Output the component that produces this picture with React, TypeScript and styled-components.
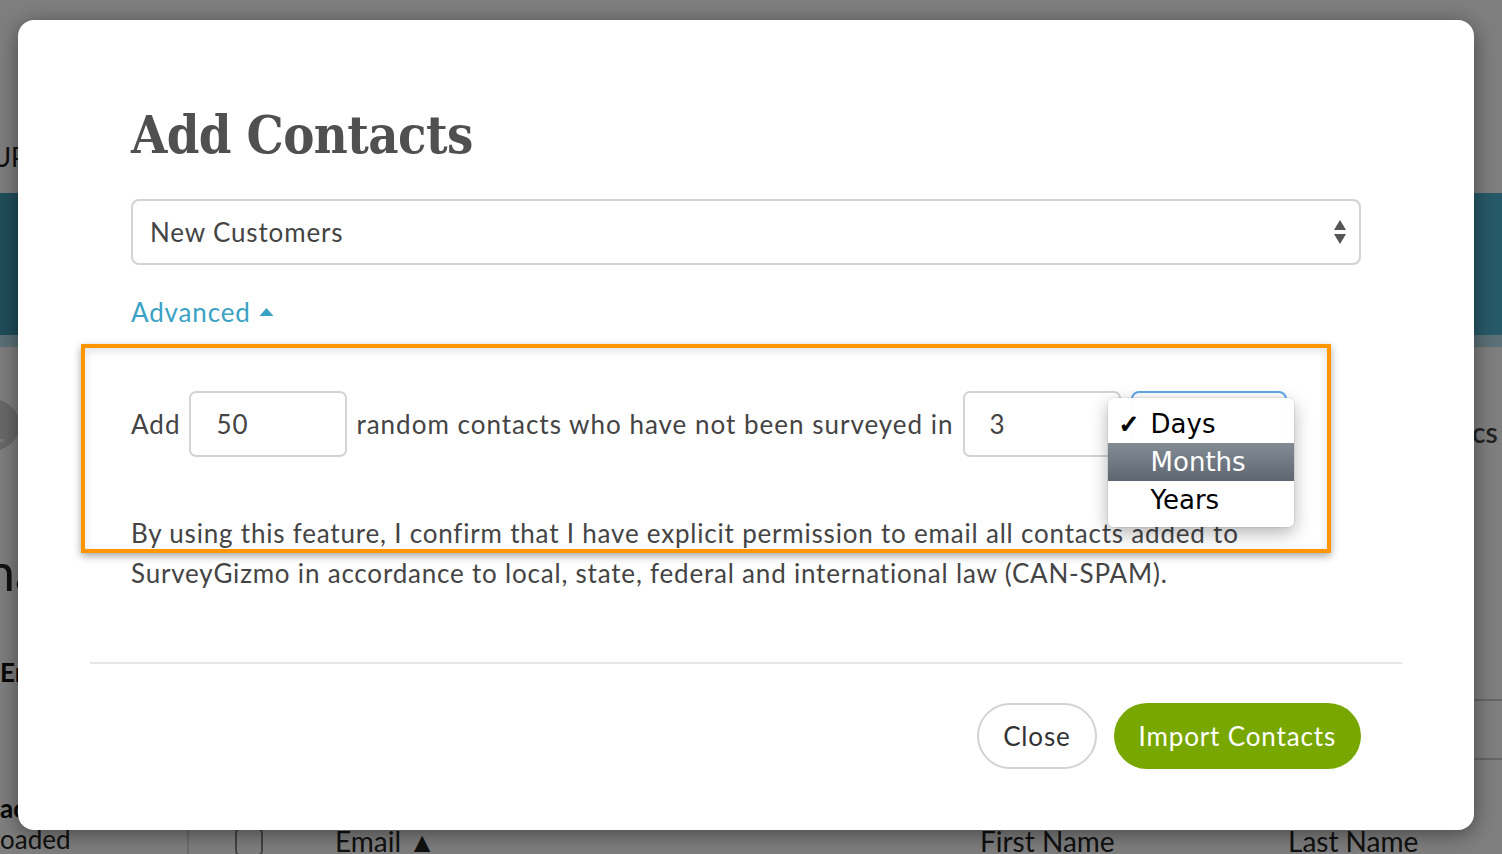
import React from "react";
import styled, { createGlobalStyle } from "styled-components";

const Global = createGlobalStyle`
  html, body { margin: 0; padding: 0; }
  body {
    width: 1502px;
    height: 854px;
    overflow: hidden;
    font-family: Lato, "Open Sans", sans-serif;
    background: #fff;
  }
`;

/* ---------- background page ---------- */
const Page = styled.div`
  position: relative;
  width: 1502px;
  height: 854px;
  overflow: hidden;
  display: flex;
  flex-direction: column;
  font-family: Lato, sans-serif;
  color: #222;
`;
const PageHeader = styled.div`
  flex-shrink: 0;
  height: 193px;
  display: flex;
  align-items: flex-end;
  padding-bottom: 20px;
  box-sizing: border-box;
  font-size: 26px;
  color: #222;
  margin-left: -8px;
`;
const Band = styled.div`
  flex-shrink: 0;
  height: 154px;
  display: flex;
  flex-direction: column;
  background: #4fb2cf;
`;
const BandMain = styled.div`
  flex: 1;
  background: linear-gradient(90deg, #3f9cb6, #4aaecc 50%, #4fb4d2);
`;
const BandStrip = styled.div`
  height: 12px;
  background: #b6e3ee;
`;
const PageBody = styled.div`
  flex: 1;
  min-height: 0;
  display: flex;
  justify-content: space-between;
`;
const LeftCol = styled.div`
  display: flex;
  flex-direction: column;
  margin-left: -44px;
  padding-top: 51px;
`;
const Circle = styled.div`
  width: 64px;
  height: 64px;
  border-radius: 50%;
  background: #d2d2d2;
  color: #f4f4f4;
  font-size: 44px;
  display: flex;
  align-items: center;
  justify-content: center;
  padding-left: 12px;
  box-sizing: border-box;
`;
const BigText = styled.div`
  margin-top: 88px;
  margin-left: 30px;
  font-size: 52px;
  color: #222;
`;
const BoldText = styled.div<{ $mt: number }>`
  margin-top: ${(p) => p.$mt}px;
  margin-left: 44px;
  font-size: 26px;
  font-weight: 700;
  color: #111;
`;
const PlainText = styled.div`
  margin-left: 44px;
  font-size: 26px;
  color: #222;
  line-height: 30px;
`;
const RightCol = styled.div`
  width: 30px;
  display: flex;
  flex-direction: column;
  padding-top: 68px;
`;
const RightText = styled.div`
  font-size: 28px;
  color: #444;
  font-weight: 600;
`;
const RightLine = styled.div<{ $mt: number }>`
  margin-top: ${(p) => p.$mt}px;
  height: 2px;
  background: #ccc;
`;
const TableHead = styled.div`
  position: absolute;
  left: 187px;
  right: 0;
  bottom: -16px;
  height: 44px;
  border-left: 2px solid #ddd;
  display: flex;
  align-items: center;
  font-size: 28px;
  color: #222;
`;
const Check = styled.div`
  width: 24px;
  height: 24px;
  border: 2px solid #888;
  border-radius: 5px;
  margin-left: 46px;
  margin-right: 72px;
  margin-top: -12px;
`;
const HeadCell = styled.div<{ $w: number }>`
  width: ${(p) => p.$w}px;
  margin-top: -14px;
`;

const Overlay = styled.div`
  position: absolute;
  inset: 0;
  background: rgba(0, 0, 0, 0.5);
`;

/* ---------- modal ---------- */
const Modal = styled.div`
  position: absolute;
  left: 18px;
  top: 20px;
  width: 1456px;
  height: 810px;
  background: #fff;
  border-radius: 16px;
  box-shadow: 0 4px 22px rgba(0, 0, 0, 0.45);
  display: flex;
  flex-direction: column;
  box-sizing: border-box;
  font-family: Lato, sans-serif;
  color: #444;
  letter-spacing: 0.85px;
`;
const ModalBody = styled.div`
  position: relative;
  padding: 0 113px;
  display: flex;
  flex-direction: column;
`;
const Title = styled.h1`
  margin: 80px 0 0;
  font-family: "DejaVu Serif", serif;
  font-stretch: condensed;
  font-weight: 700;
  font-size: 52px;
  line-height: 70px;
  color: #505050;
  letter-spacing: -0.6px;
`;
const SelectBox = styled.div`
  margin-top: 29px;
  height: 66px;
  border: 2px solid #d3d3d3;
  border-radius: 8px;
  box-sizing: border-box;
  display: flex;
  align-items: center;
  justify-content: space-between;
  padding: 0 12px 0 17px;
  font-size: 26px;
  color: #444;
`;
const Toggle = styled.div`
  margin-top: 32px;
  display: flex;
  align-items: center;
  gap: 8px;
  font-size: 26px;
  color: #3aa2c4;
  height: 30px;
`;
const Row = styled.div`
  margin-top: 64px;
  display: flex;
  align-items: center;
  gap: 9px;
  font-size: 26px;
  letter-spacing: 1px;
  color: #444;
`;
const NumInput = styled.div`
  width: 158px;
  height: 66px;
  flex-shrink: 0;
  border: 2px solid #d3d3d3;
  border-radius: 7px;
  box-sizing: border-box;
  display: flex;
  align-items: center;
  padding-left: 25px;
  font-size: 26px;
  color: #444;
`;
const UnitSelect = styled.div`
  position: relative;
  width: 156px;
  height: 66px;
  flex-shrink: 0;
  margin-left: 1px;
  border: 2px solid #5fa8ea;
  border-radius: 8px;
  box-sizing: border-box;
`;
const Menu = styled.div`
  position: absolute;
  left: -25px;
  top: 5px;
  width: 186px;
  padding: 7px 0 8px;
  background: rgba(255, 255, 255, 0.98);
  border-radius: 6px;
  box-shadow: 0 6px 18px rgba(0, 0, 0, 0.3), 0 0 0 1px rgba(0, 0, 0, 0.06);
  font-family: "DejaVu Sans", sans-serif;
  letter-spacing: 0;
  z-index: 3;
`;
const MenuItem = styled.div<{ $active?: boolean }>`
  position: relative;
  height: 38px;
  display: flex;
  align-items: center;
  padding-left: 43px;
  font-size: 26px;
  color: ${(p) => (p.$active ? "#fff" : "#000")};
  background: ${(p) =>
    p.$active ? "linear-gradient(#838b94, #5e666f)" : "transparent"};
`;
const Tick = styled.span`
  position: absolute;
  left: 11px;
  font-size: 25px;
  font-weight: 700;
  -webkit-text-stroke: 1.2px #000;
`;
const Para = styled.p`
  margin: 56px 0 0;
  font-size: 26px;
  line-height: 40px;
  letter-spacing: 0.8px;
  color: #444;
`;
const Annotation = styled.div`
  position: absolute;
  left: 63px;
  top: 324px;
  width: 1250px;
  height: 209px;
  border: 4px solid #ff9600;
  box-sizing: border-box;
  box-shadow: 0 3px 8px rgba(0, 0, 0, 0.35), inset 0 3px 8px rgba(0, 0, 0, 0.12);
  pointer-events: none;
`;
const Divider = styled.div`
  margin: 69px 72px 0;
  height: 2px;
  background: #e6e6e6;
`;
const Footer = styled.div`
  display: flex;
  justify-content: flex-end;
  gap: 17px;
  padding: 39px 113px 0;
`;
const Button = styled.button<{ $primary?: boolean }>`
  height: 66px;
  border-radius: 33px;
  box-sizing: border-box;
  padding: 0 ${(p) => (p.$primary ? 25 : 24)}px;
  font-family: Lato, sans-serif;
  font-size: 26px;
  letter-spacing: 0.85px;
  border: ${(p) => (p.$primary ? "none" : "2px solid #d3d3d3")};
  background: ${(p) => (p.$primary ? "#78a800" : "#fff")};
  color: ${(p) => (p.$primary ? "#fff" : "#333")};
  cursor: pointer;
`;

const Arrows = () => (
  <svg width="14" height="26" viewBox="0 0 14 26">
    <path d="M7 1 L13 11 L1 11 Z" fill="#555" />
    <path d="M1 15 L13 15 L7 25 Z" fill="#555" />
  </svg>
);

const Caret = () => (
  <svg width="15" height="10" viewBox="0 0 15 10">
    <path d="M7.5 1 L14.5 9 L0.5 9 Z" fill="#3aa2c4" />
  </svg>
);

export default function App() {
  return (
    <>
      <Global />
      <Page>
        <PageHeader>UP</PageHeader>
        <Band>
          <BandMain />
          <BandStrip />
        </Band>
        <PageBody>
          <LeftCol>
            <Circle>1</Circle>
            <BigText>na</BigText>
            <BoldText $mt={54}>Em</BoldText>
            <BoldText $mt={104}>ac</BoldText>
            <PlainText>oaded</PlainText>
          </LeftCol>
          <RightCol>
            <RightText>cs</RightText>
            <RightLine $mt={250} />
            <RightLine $mt={57} />
          </RightCol>
        </PageBody>
        <TableHead>
          <Check />
          <HeadCell $w={645}>Email ▲</HeadCell>
          <HeadCell $w={308}>First Name</HeadCell>
          <HeadCell $w={200}>Last Name</HeadCell>
        </TableHead>
        <Overlay />
        <Modal>
          <ModalBody>
            <Title>Add Contacts</Title>
            <SelectBox>
              <span>New Customers</span>
              <Arrows />
            </SelectBox>
            <Toggle>
              <span>Advanced</span>
              <Caret />
            </Toggle>
            <Row>
              <span>Add</span>
              <NumInput>50</NumInput>
              <span>random contacts who have not been surveyed in</span>
              <NumInput>3</NumInput>
              <UnitSelect>
                <Menu>
                  <MenuItem>
                    <Tick>✓</Tick>Days
                  </MenuItem>
                  <MenuItem $active>Months</MenuItem>
                  <MenuItem>Years</MenuItem>
                </Menu>
              </UnitSelect>
            </Row>
            <Para>
              By using this feature, I confirm that I have explicit permission to email all contacts added to
              SurveyGizmo in accordance to local, state, federal and international law (CAN-SPAM).
            </Para>
            <Annotation />
          </ModalBody>
          <Divider />
          <Footer>
            <Button>Close</Button>
            <Button $primary>Import Contacts</Button>
          </Footer>
        </Modal>
      </Page>
    </>
  );
}
